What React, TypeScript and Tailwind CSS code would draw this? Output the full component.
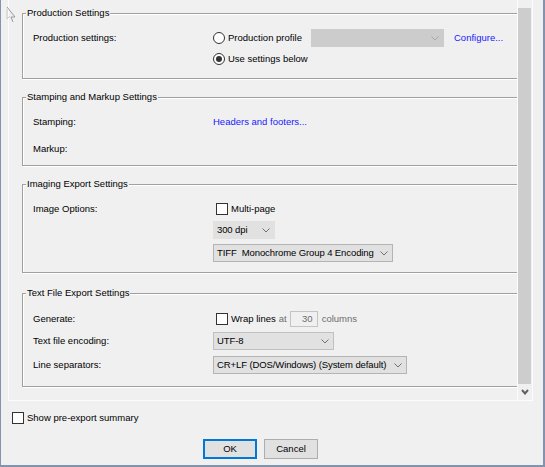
import React from 'react';

function Chevron({ className = 'text-[#606060]' }: { className?: string }) {
  return (
    <svg width="8" height="5" viewBox="0 0 8 5" className={className}>
      <polyline points="0.5,0.5 4,4 7.5,0.5" fill="none" stroke="currentColor" strokeWidth="1" />
    </svg>
  );
}

function Group({ title, className, children }: { title: string; className: string; children: React.ReactNode }) {
  return (
    <div className={`relative w-[510px] border border-[#a0a0a0] shadow-[inset_1px_1px_0_#ffffff,1px_1px_0_#ffffff] ${className}`}>
      <span className="absolute -top-[7px] left-[3px] bg-[#f0f0f0] px-[1px] leading-[12px]">{title}</span>
      {children}
    </div>
  );
}

function Row({ label, className = 'h-[20px]', children }: { label?: string; className?: string; children?: React.ReactNode }) {
  return (
    <div className={`flex items-center ${className}`}>
      <div className="w-[190px] shrink-0 pl-[10px]">{label}</div>
      <div className="flex items-center">{children}</div>
    </div>
  );
}

function Radio({ checked }: { checked?: boolean }) {
  return (
    <span className="w-[12px] h-[12px] rounded-full border border-[#333333] bg-white flex items-center justify-center shrink-0">
      {checked && <span className="w-[6px] h-[6px] rounded-full bg-[#333333]" />}
    </span>
  );
}

function Checkbox() {
  return <span className="w-[12px] h-[12px] border border-[#333333] bg-white shrink-0" />;
}

function Select({ value, className }: { value: string; className: string }) {
  return (
    <div className={`flex items-center justify-between h-[18px] bg-[#e1e1e1] border pl-[3px] pr-[4px] ${className}`}>
      <span className="whitespace-pre tracking-[-0.1px]">{value}</span>
      <Chevron className="text-[#707070]" />
    </div>
  );
}

export default function App() {
  return (
    <div className="relative w-[545px] h-[467px] overflow-hidden bg-[#f0f0f0] border-l border-r-2 border-b-2 border-[#8493ad] font-['Liberation_Sans',Arial,sans-serif] text-[9.5px] leading-[12px] text-black">
      {/* scroll panel */}
      <div className="ml-[7px] w-[525px] h-[401px] flex border-l border-r border-b border-[#fcfcfc]">
        <div className="w-[508px] h-full overflow-hidden pl-[13px] pt-[13px]">
          <Group title="Production Settings" className="pt-[14px] pb-[9px]">
            <Row label="Production settings:">
              <span className="flex items-center gap-[3px] w-[98px]">
                <Radio />
                <span>Production profile</span>
              </span>
              <div className="flex items-center justify-end w-[133px] h-[18px] bg-[#cccccc] pr-[5px]">
                <Chevron className="text-[#a8a8a8]" />
              </div>
              <span className="ml-[10px] text-[#1a1aff]">Configure...</span>
            </Row>
            <Row className="h-[20px] mt-[1px]">
              <span className="flex items-center gap-[3px]">
                <Radio checked />
                <span>Use settings below</span>
              </span>
            </Row>
          </Group>

          <Group title="Stamping and Markup Settings" className="mt-[18px] pt-[14px] pb-[6px]">
            <Row label="Stamping:">
              <span className="text-[#1a1aff]">Headers and footers...</span>
            </Row>
            <Row label="Markup:" className="h-[20px] mt-[7px]" />
          </Group>

          <Group title="Imaging Export Settings" className="mt-[18px] pt-[14px] pb-[10px]">
            <Row label="Image Options:">
              <span className="flex items-center gap-[3px] ml-[3px]">
                <Checkbox />
                <span>Multi-page</span>
              </span>
            </Row>
            <Row className="h-[18px] mt-[2px]">
              <Select value="300 dpi" className="w-[62px] border-[#e1e1e1]" />
            </Row>
            <Row className="h-[18px] mt-[5px]">
              <Select value="TIFF  Monochrome Group 4 Encoding" className="w-[180px] border-[#b4b4b4]" />
            </Row>
          </Group>

          <Group title="Text File Export Settings" className="mt-[20px] pt-[15px] pb-[12px]">
            <Row label="Generate:">
              <span className="flex items-center gap-[3px] ml-[3px]">
                <Checkbox />
                <span>Wrap lines</span>
              </span>
              <span className="ml-[3px] text-[#6d6d6d]">at</span>
              <span className="ml-[3px] w-[28px] h-[16px] border border-[#c4c4c4] flex items-center justify-end pr-[4px] text-[#6d6d6d]">30</span>
              <span className="ml-[4px] text-[#6d6d6d]">columns</span>
            </Row>
            <Row label="Text file encoding:" className="h-[18px] mt-[3px]">
              <Select value="UTF-8" className="w-[121px] border-[#c0c0c0]" />
            </Row>
            <Row label="Line separators:" className="h-[18px] mt-[6px]">
              <Select value="CR+LF (DOS/Windows) (System default)" className="w-[194px] border-[#b4b4b4]" />
            </Row>
          </Group>
        </div>

        {/* scrollbar */}
        <div className="w-[15px] h-full border-l border-[#fcfcfc] flex flex-col">
          <div className="mt-[8px] h-[376px] w-[13px] bg-[#cdcdcd]" />
          <div className="flex-1 flex items-center justify-center">
            <svg width="8" height="6" viewBox="0 0 8 6" className="text-[#606060]">
              <polyline points="1,1 4,4.5 7,1" fill="none" stroke="currentColor" strokeWidth="2" />
            </svg>
          </div>
        </div>
      </div>

      {/* bottom */}
      <div className="mt-[11px] ml-[11px] flex items-center gap-[3px] h-[12px]">
        <Checkbox />
        <span>Show pre-export summary</span>
      </div>
      <div className="mt-[15px] ml-[202px] flex gap-[7px]">
        <button className="w-[54px] h-[20px] border-2 border-[#0078d7] bg-[#e1e1e1] flex items-center justify-center">OK</button>
        <button className="w-[54px] h-[20px] border border-[#adadad] bg-[#e1e1e1] flex items-center justify-center">Cancel</button>
      </div>

      {/* mouse pointer remnant */}
      <svg className="absolute left-[4px] top-[6px]" width="12" height="18" viewBox="0 0 12 18">
        <polyline points="2,1 10,11 6,11 8,16" fill="none" stroke="#9a9a9a" strokeWidth="1" />
        <polyline points="2,3 2,13 5,10" fill="none" stroke="#c8c8c8" strokeWidth="1" />
      </svg>
    </div>
  );
}
